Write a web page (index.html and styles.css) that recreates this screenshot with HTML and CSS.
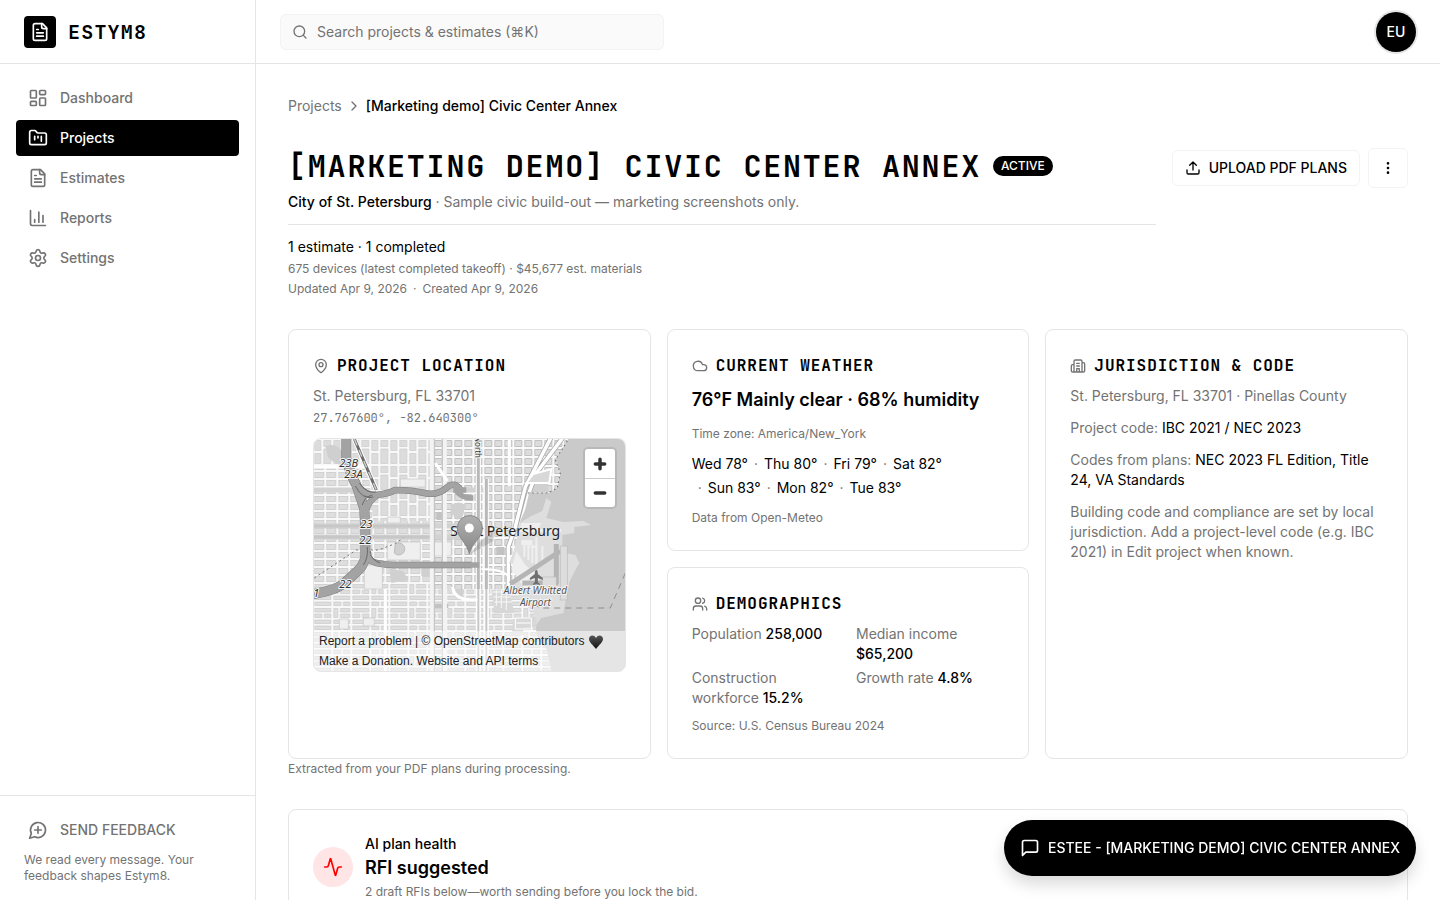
FILE: index.html
```html
<!DOCTYPE html>
<html lang="en">
<head>
<meta charset="utf-8">
<title>[Marketing demo] Civic Center Annex - Estym8</title>
<link rel="stylesheet" href="styles.css">
</head>
<body>
<svg class="sprite" aria-hidden="true">
  <symbol id="i-file" viewBox="0 0 24 24"><path d="M15 2H6a2 2 0 0 0-2 2v16a2 2 0 0 0 2 2h12a2 2 0 0 0 2-2V7Z"/><path d="M14 2v4a2 2 0 0 0 2 2h4M10 9H8M16 13H8M16 17H8"/></symbol>
</svg>
<div class="app">
  <aside class="sidebar">
    <a class="brand" href="#"><span class="brand-mark"><svg class="icon icon-20"><use href="#i-file"/></svg></span><span class="brand-name">ESTYM8</span></a>
    <nav class="nav" aria-label="Main">
      <a class="nav-item" href="#"><svg class="icon icon-20" viewBox="0 0 24 24"><rect width="7" height="9" x="3" y="3" rx="1"/><rect width="7" height="5" x="14" y="3" rx="1"/><rect width="7" height="9" x="14" y="12" rx="1"/><rect width="7" height="5" x="3" y="16" rx="1"/></svg>Dashboard</a>
      <a class="nav-item active" href="#" aria-current="page"><svg class="icon icon-20" viewBox="0 0 24 24"><path d="M4 20h16a2 2 0 0 0 2-2V8a2 2 0 0 0-2-2h-7.930a2 2 0 0 1-1.660-.9l-.820-1.200A2 2 0 0 0 7.930 3H4a2 2 0 0 0-2 2v13c0 1.100.9 2 2 2ZM8 10v4M12 10v2M16 10v6"/></svg>Projects</a>
      <a class="nav-item" href="#"><svg class="icon icon-20"><use href="#i-file"/></svg>Estimates</a>
      <a class="nav-item" href="#"><svg class="icon icon-20" viewBox="0 0 24 24"><path d="M3 3v16a2 2 0 0 0 2 2h16M18 17V9M13 17V5M8 17v-3"/></svg>Reports</a>
      <a class="nav-item" href="#"><svg class="icon icon-20" viewBox="0 0 24 24"><path d="M9.671 4.136a2.340 2.340 0 0 1 4.659 0 2.340 2.340 0 0 0 3.319 1.915 2.340 2.340 0 0 1 2.330 4.033 2.340 2.340 0 0 0 0 3.831 2.340 2.340 0 0 1-2.330 4.033 2.340 2.340 0 0 0-3.319 1.915 2.340 2.340 0 0 1-4.659 0 2.340 2.340 0 0 0-3.320-1.915 2.340 2.340 0 0 1-2.330-4.033 2.340 2.340 0 0 0 0-3.831A2.340 2.340 0 0 1 6.350 6.051a2.340 2.340 0 0 0 3.319-1.915"/><circle cx="12" cy="12" r="3"/></svg>Settings</a>
    </nav>
    <div class="feedback">
      <button class="feedback-button" type="button"><svg class="icon icon-20" viewBox="0 0 24 24"><path d="M7.900 20A9 9 0 1 0 4 16.100L2 22ZM8 12h8M12 8v8"/></svg>SEND FEEDBACK</button>
      <p class="feedback-note">We read every message. Your feedback shapes Estym8.</p>
    </div>
  </aside>

  <div class="page">
    <header class="topbar">
      <label class="search"><svg class="icon icon-16" viewBox="0 0 24 24"><path d="m21 21-4.340-4.340"/><circle cx="11" cy="11" r="8"/></svg><input type="search" aria-label="Search projects and estimates" placeholder="Search projects &amp; estimates (⌘K)"></label>
      <button class="avatar" type="button" aria-label="Account menu">EU</button>
    </header>

    <main class="main">
      <nav class="breadcrumb" aria-label="Breadcrumb"><a href="#">Projects</a><svg class="icon icon-16" viewBox="0 0 24 24"><path d="m9 18 6-6-6-6"/></svg><span>[Marketing demo] Civic Center Annex</span></nav>

      <section class="project-head">
        <div class="project-info">
          <div class="title-row"><h1>[MARKETING DEMO] CIVIC CENTER ANNEX</h1><span class="badge">ACTIVE</span></div>
          <p class="subtitle"><b>City of St. Petersburg</b> · Sample civic build-out — marketing screenshots only.</p>
          <div class="stats">
            <p>1 estimate · 1 completed</p>
            <p class="small">675 devices (latest completed takeoff) · $45,677 est. materials</p>
            <p class="small">Updated Apr 9, 2026<span class="dot">·</span>Created Apr 9, 2026</p>
          </div>
        </div>
        <div class="actions">
          <button class="upload" type="button"><svg class="icon icon-16" viewBox="0 0 24 24"><path d="M12 3v12M17 8l-5-5-5 5M21 15v4a2 2 0 0 1-2 2H5a2 2 0 0 1-2-2v-4"/></svg>UPLOAD PDF PLANS</button>
          <button class="more" type="button" aria-label="More actions"><svg class="icon icon-16" viewBox="0 0 24 24"><circle cx="12" cy="12" r="1"/><circle cx="12" cy="5" r="1"/><circle cx="12" cy="19" r="1"/></svg></button>
        </div>
      </section>

      <section class="cards">
        <article class="card">
          <h2><svg class="icon icon-16" viewBox="0 0 24 24"><path d="M20 10c0 4.993-5.539 10.193-7.399 11.799a1 1 0 0 1-1.202 0C9.539 20.193 4 14.993 4 10a8 8 0 0 1 16 0"/><circle cx="12" cy="10" r="3"/></svg>PROJECT LOCATION</h2>
          <p class="muted">St. Petersburg, FL 33701</p>
          <p class="coords">27.767600°, -82.640300°</p>
          <div class="map">
            <svg class="map-canvas" viewBox="0 0 312 232" preserveAspectRatio="xMidYMid slice" role="img" aria-label="Map of St. Petersburg">
              <defs>
                <pattern id="west" width="12" height="8" patternUnits="userSpaceOnUse"><rect width="12" height="8" fill="#f8f8f8"/><rect x="1.500" y="1.500" width="9" height="5" fill="#dedede" stroke="#c6c6c6" stroke-width=".7"/></pattern>
                <pattern id="north" width="19" height="26" patternUnits="userSpaceOnUse"><rect width="19" height="26" fill="#f8f8f8"/><path d="M1.500 1.500h6v10h-6zM10.500 1.500h7v6h-7zM10.500 10h7v14.500h-7zM1.500 14.500h6v10h-6z" fill="#dcdcdc" stroke="#c4c4c4" stroke-width=".6"/></pattern>
                <pattern id="center" width="10" height="9" patternUnits="userSpaceOnUse"><rect width="10" height="9" fill="#fafafa"/><path d="M1.500 1.500h7v6h-7z" fill="#dcdcdc" stroke="#bcbcbc" stroke-width=".9"/></pattern>
                <pattern id="south" width="38" height="24" patternUnits="userSpaceOnUse"><rect width="38" height="24" fill="#f8f8f8"/><path d="M1.500 1.500h16v3.500h-16zM1.500 7h7v3.500h-7zM11 7h6.500v3.500h-6.500zM1.500 13h16v3.500h-16zM1.500 19h16v3.500h-16zM20.500 1.500h4v9h-4zM27 1.500h9.500v3.500h-9.500zM27 7h9.500v3.500h-9.500zM20.500 13h16v3.500h-16zM20.500 19h7v3.500h-7zM30 19h6.500v3.500h-6.500z" fill="#dedede" stroke="#c2c2c2" stroke-width=".6"/></pattern>
                <linearGradient id="pin" x2="0" y2="1"><stop stop-color="#b0b0b0"/><stop offset="1" stop-color="#888"/></linearGradient>
                <linearGradient id="heart" x2="0" y2="1"><stop stop-color="#555"/><stop offset="1" stop-color="#111"/></linearGradient>
                <clipPath id="land"><path d="M0 0H255L242 20L247 34L244 49L235 54L216 53L212 70L207 82L202 107L196 124L208 128L202 145L207 160L222 176L223 196L233 210L238 232H0Z"/></clipPath>
              </defs>
              <rect width="312" height="232" fill="#cacaca"/>
              <path d="M203 86 218 77l11-5 4-13 5 4-5 16 17 4 20-1 8 4-17 2v6l-12 2v17l13 3 4 8-4 7-6 12-6 31-22 5-14 19-18-4-5-80Z" fill="#dedede"/>
              <g clip-path="url(#land)">
                <rect width="312" height="232" fill="#f0f0f0"/>
                <rect y="28" width="118" height="75" fill="url(#west)"/>
                <path d="M0 0H118V82H60L55 28H0Z" fill="url(#north)"/>
                <path d="M0 103H118V145H0Z" fill="url(#west)"/>
                <path d="M0 145H312V232H0Z" fill="url(#south)"/>
                <path d="M118 0H312V150H118Z" fill="url(#center)"/>
                <path d="M12 7q13-4 19 9l5 12q-13-2-21-9Z" fill="#cfcfcf"/>
                <g fill="#efefef" stroke="#c8c8c8" stroke-width=".7"><path d="M74 78h13v6H74zM87 40h25v8H87zM74 103h33v18H74zM51 126h18v24H51zM118 103h20v14h-20zM26 180h9v10h-9zM50 179h11v8H50z"/></g>
                <g fill="#d0d0d0"><path d="M138 66q7-5 14 0l-2 10-6 5-7-8zM108 128h9v9h-9zM76 130l14 2 5 9-17 3zM142 150h8v8h-8zM214 45h21v9h-21z"/></g>
                <g fill="#c2c2c2"><path d="M121 165h14v4h-14zM123 73h10v8h-10zM183 108h8v8h-8z"/></g>
                <path d="M82 105a6 6 0 1 1-1 9Z" fill="#d0d0d0" stroke="#bbb"/>
                <g fill="none" stroke-width="5"><path d="M0 51H46M118 51H170M0 87H158M0 98H158" stroke="#d2d2d2"/><path d="M0 87H118M0 98H118" stroke="#c7c7c7" stroke-width="3"/></g>
                <g fill="none"><path d="M165 0V232M173 40V232" stroke-width="5" stroke="#fff"/><path d="M165 0V150M173 40V150" stroke="#b9b9b9" stroke-width="3"/><path d="M165 150V232M173 150V232" stroke="#c6c6c6" stroke-width="2"/></g>
                <path d="M119 0V232M131 0V232" stroke="#f3f3f3" stroke-width="5"/>
                <path d="M121 0V232M129 0V232" stroke="#bdbdbd" stroke-width="1"/>
                <path d="M72 150V232M0 28H55M196 0V47M134 42L122 24" fill="none" stroke="#fff" stroke-width="3"/>
                <path d="M238 -2L212 48L202 88L195 108V150M250 -2L223 34L216 53L207 87" fill="none" stroke="#aaa" stroke-width="5"/>
                <path d="M238 -2L212 48L202 88L195 108V150M250 -2L223 34L216 53L207 87" fill="none" stroke="#fff" stroke-width="3.500"/>
                <path d="M213 44h23l2-14-18 5Z" fill="#d8d8d8" stroke="#fff" stroke-width="2"/>
                <path d="M168 130q20 0 27 7M196 118l12-6 7 17h-14Z" fill="none" stroke="#fff" stroke-width="2"/>
                <path d="M139 148q2 10 12 12t13 0" fill="none" stroke="#fff" stroke-width="3"/>
                <path d="M178 151l18 1 5 22h-20z" fill="#d7d7d7"/><path d="M179 153h17M180 158h18M181 163h18M183 151v16M188 151v18M193 151v20" stroke="#f8f8f8"/>
              </g>
              <path d="M254 2L242 21l5 13-3 15-9 5h-23" fill="none" stroke="#777" stroke-dasharray="1.500 3" stroke-width="1.200"/>
              <path d="M41 0 63 51" stroke="#fff" stroke-width="5"/><path d="M41 0 63 51" stroke="#6b6b6b" stroke-width="3"/><path d="M41 0 63 51" stroke="#ccc" stroke-dasharray="7 5" stroke-width="1.500"/>
              <path d="M1 139 43 111H65L81 105 90 99" fill="none" stroke="#777" stroke-dasharray="2 3"/>
              <g fill="none" stroke-linejoin="round">
                <g stroke="#7c7c7c"><path d="M33 0V19Q37 36 43 46L51 70L52 91V118Q50 128 42 134L30 145Q20 152 0 155" stroke-width="10"/><path d="M44 46Q52 57 63 56T82 51Q98 51 111 54T133 49T148 53M52 74Q54 62 66 55M52 112Q54 122 63 124T80 126H158" stroke-width="6.500"/></g>
                <g stroke="#a3a3a3"><path d="M33 0V19Q37 36 43 46L51 70L52 91V118Q50 128 42 134L30 145Q20 152 0 155" stroke-width="9"/><path d="M44 46Q52 57 63 56T82 51Q98 51 111 54T133 49T148 53M52 74Q54 62 66 55M52 112Q54 122 63 124T80 126H166M140 51H153M143 52Q148 59 160 59" stroke-width="5.500"/></g>
                <path d="M42 47q7 14 18 11M46 44q7 11 17 9M49 66q2-8 10-10M50 126q5-7 4-18M57 112q0 9 10 12" stroke="#5c5c5c" stroke-width=".8"/>
              </g>
              <g fill="#efefef"><path d="M208 84h20l-3 6h23v3h-42zM208 101h11v5h-11zM211 108l13-2v21h-2v-18M227 109v17M232 109v18M237 111v16"/><path d="M203 112l9 14 12 10 5 17-18-4-13-19Z"/></g>
              <path d="M223 98v28M211 104v14M215 105v16M219 106v18M229 107v17" stroke="#efefef" stroke-width="2"/>
              <g fill="none" stroke="#b5b5b5" stroke-width="5"><path d="M197 145 247 112M243 105V145M209 144H245M202 151H216"/></g>
              <path d="M247 107h7v54h-7zM229 138h14v12h-14z" fill="#ddd" stroke="#bcbcbc" stroke-width=".7"/>
              <path d="M213 178h10v10h-13v8h-12l2-16Z" fill="#d8d8d8"/><path d="M202 179h16v11h-16zM203 184h14" fill="none" stroke="#fff"/>
              <path d="M220 165l7 4H297L312 134" fill="none" stroke="#8e8e8e" stroke-dasharray="6 5"/>
              <path d="M223 131q1.500 0 1.500 4l5 4v2l-5-2v4l2 2v1l-3.500-1-3.500 1v-1l2-2v-4l-5 2v-2l5-4q0-4 1.500-4" fill="#6f6f6f"/>
              <g class="map-route"><text x="26" y="28">23B</text><text x="31" y="39">23A</text><text x="47" y="89">23</text><text x="46" y="105">22</text><text x="26" y="149">22</text><text x="0" y="158">1</text></g>
              <text class="map-road" transform="translate(162 -3) rotate(90)">North</text>
              <text class="map-city" x="137" y="97">Saint Petersburg</text>
              <g class="map-place"><text x="222" y="155">Albert Whitted</text><text x="222" y="167">Airport</text></g>
              <path d="m157 115 10-13 14-10-1 10Z" fill="#777" opacity=".3"/>
              <path d="M156 115C154 104 144 99 144 89a12.500 12.500 0 0 1 25 0c0 10-11 15-13 26Z" fill="url(#pin)" stroke="#888" stroke-width="1"/><circle cx="156" cy="89" r="4.500" fill="#fff"/>
            </svg>
            <div class="zoom"><button type="button" aria-label="Zoom in"><svg viewBox="0 0 12 12"><path d="M6 2v8M2 6h8"/></svg></button><button type="button" aria-label="Zoom out"><svg viewBox="0 0 12 12"><path d="M2 6h8"/></svg></button></div>
            <div class="attribution"><a href="#">Report a problem</a> | © <a href="#">OpenStreetMap</a> contributors <svg class="heart" viewBox="0 0 16 16"><path d="M8 15C5 11 1 8 1 5 1 1 6 0 8 4c2-4 7-3 7 1 0 3-4 6-7 10Z" fill="url(#heart)"/></svg><br><a href="#">Make a Donation</a>. <a href="#">Website and API terms</a></div>
          </div>
        </article>

        <div class="card-stack">
          <article class="card">
            <h2><svg class="icon icon-16" viewBox="0 0 24 24"><path d="M17.500 19H9a7 7 0 1 1 6.710-9h1.790a4.500 4.500 0 1 1 0 9Z"/></svg>CURRENT WEATHER</h2>
            <p class="weather-now">76°F Mainly clear · 68% humidity</p>
            <p class="small spaced">Time zone: America/New_York</p>
            <ul class="forecast"><li>Wed 78°</li><li>Thu 80°</li><li>Fri 79°</li><li>Sat 82°</li><li>Sun 83°</li><li>Mon 82°</li><li>Tue 83°</li></ul>
            <p class="small spaced">Data from Open-Meteo</p>
          </article>
          <article class="card">
            <h2><svg class="icon icon-16" viewBox="0 0 24 24"><path d="M16 21v-2a4 4 0 0 0-4-4H6a4 4 0 0 0-4 4v2M16 3.128a4 4 0 0 1 0 7.744M22 21v-2a4 4 0 0 0-3-3.870"/><circle cx="9" cy="7" r="4"/></svg>DEMOGRAPHICS</h2>
            <div class="facts"><p>Population <b>258,000</b></p><p>Median income <b>$65,200</b></p><p>Construction workforce <b>15.2%</b></p><p>Growth rate <b>4.8%</b></p></div>
            <p class="small source">Source: U.S. Census Bureau 2024</p>
          </article>
        </div>

        <article class="card">
          <h2><svg class="icon icon-16" viewBox="0 0 24 24"><path d="M10 12h4M10 8h4M14 21v-3a2 2 0 0 0-4 0v3M6 10H4a2 2 0 0 0-2 2v7a2 2 0 0 0 2 2h16a2 2 0 0 0 2-2V9a2 2 0 0 0-2-2h-2M6 21V5a2 2 0 0 1 2-2h8a2 2 0 0 1 2 2v16M10 16h4"/></svg>JURISDICTION &amp; CODE</h2>
          <p class="muted">St. Petersburg, FL 33701 · Pinellas County</p>
          <p class="muted spaced">Project code: <span class="ink">IBC 2021 / NEC 2023</span></p>
          <p class="muted spaced">Codes from plans: <span class="ink">NEC 2023 FL Edition, Title 24, VA Standards</span></p>
          <p class="muted spaced">Building code and compliance are set by local jurisdiction. Add a project-level code (e.g. IBC 2021) in Edit project when known.</p>
        </article>
      </section>
      <p class="small extracted">Extracted from your PDF plans during processing.</p>

      <section class="card health">
        <span class="health-icon"><svg class="icon icon-20" viewBox="0 0 24 24"><path d="M22 12h-2.480a2 2 0 0 0-1.930 1.460l-2.350 8.360a.25.25 0 0 1-.480 0L9.240 2.180a.25.25 0 0 0-.480 0l-2.350 8.360A2 2 0 0 1 4.490 12H2"/></svg></span>
        <div><p class="health-label">AI plan health</p><p class="health-status">RFI suggested</p><p class="small health-note">2 draft RFIs below—worth sending before you lock the bid.</p></div>
      </section>
    </main>
  </div>
</div>
<button class="chat" type="button"><svg class="icon icon-20" viewBox="0 0 24 24"><path d="M21 15a2 2 0 0 1-2 2H7l-4 4V5a2 2 0 0 1 2-2h14a2 2 0 0 1 2 2z"/></svg>ESTEE - [MARKETING DEMO] CIVIC CENTER ANNEX</button>
</body>
</html>
```
FILE: styles.css
```css
:root { --ink: #000; --muted: #737373; --line: #e5e5e5; --soft: #f3f3f3; --mono: "JetBrains Mono", "DejaVu Sans Mono", monospace; }
*, *::before, *::after { box-sizing: border-box; }
body { margin: 0; height: 100vh; overflow: hidden; font: 400 14px/20px Inter, sans-serif; color: var(--ink); background: #fff; }
p, h1, h2, ul { margin: 0; padding: 0; }
a { color: inherit; text-decoration: none; }
button, input { font: inherit; color: inherit; }
button { cursor: pointer; }
b { font-weight: 500; color: var(--ink); }
.sprite { display: none; }
.icon { flex: none; fill: none; stroke: currentColor; stroke-width: 2; stroke-linecap: round; stroke-linejoin: round; }
.icon-16 { width: 16px; height: 16px; }
.icon-20 { width: 20px; height: 20px; }
.muted { color: var(--muted); }
.ink { color: var(--ink); }
.small { font-size: 12px; line-height: 16px; color: var(--muted); }
.spaced { margin-top: 12px; }
.dot { margin: 0 6px; }

.app { display: grid; grid-template-columns: 256px minmax(0, 1fr); height: 100vh; }
.sidebar { display: flex; flex-direction: column; border-right: 1px solid var(--line); }
.brand { display: flex; align-items: center; gap: 12px; height: 64px; padding: 0 24px; border-bottom: 1px solid var(--line); }
.brand-mark { display: grid; place-items: center; width: 32px; height: 32px; border-radius: 4px; background: #000; color: #fff; }
.brand-name { font: 600 20px/28px var(--mono); letter-spacing: .06em; }
.nav { flex: 1; display: flex; flex-direction: column; gap: 4px; padding: 16px; }
.nav-item { display: flex; align-items: center; gap: 12px; height: 36px; padding: 0 12px; border-radius: 4px; font-weight: 500; color: var(--muted); }
.nav-item.active { background: #000; color: #fff; }
.feedback { padding: 16px; border-top: 1px solid var(--line); }
.feedback-button { display: flex; align-items: center; gap: 12px; width: 100%; height: 36px; padding: 0 12px; border: 0; background: none; font-weight: 500; color: var(--muted); }
.feedback-note { padding: 4px 8px 0; font-size: 12px; line-height: 16px; color: var(--muted); }

.page { display: flex; flex-direction: column; min-width: 0; min-height: 0; }
.topbar { flex: none; display: flex; align-items: center; justify-content: space-between; height: 64px; padding: 0 24px; border-bottom: 1px solid var(--line); }
.search { display: flex; align-items: center; gap: 8px; width: 384px; height: 36px; padding: 0 12px 0 11px; border: 1px solid var(--soft); border-radius: 6px; background: #fafafa; color: var(--muted); }
.search input { flex: 1; min-width: 0; padding: 0 0 0 1px; border: 0; outline: 0; background: none; }
.search input::placeholder { color: var(--muted); opacity: 1; }
.avatar { width: 40px; height: 40px; padding: 0; border: 0; border-radius: 50%; background: #000; color: #fff; font-weight: 500; box-shadow: 0 0 0 2px var(--line); }
.main { flex: 1; min-height: 0; overflow: hidden; padding: 32px; }
.breadcrumb { display: flex; align-items: center; gap: 4px; color: var(--muted); }
.breadcrumb span { font-weight: 500; color: var(--ink); }

.project-head { display: flex; align-items: flex-start; gap: 16px; margin: 32px 0; }
.project-info { flex: 1; min-width: 0; }
.title-row { display: flex; align-items: center; gap: 12px; }
h1 { font: 600 30px/36px var(--mono); letter-spacing: .06em; }
.badge { padding: 2px 8px; border-radius: 10px; background: #000; color: #fff; font-size: 12px; line-height: 16px; font-weight: 500; }
.subtitle { margin-top: 8px; color: var(--muted); }
.stats { display: grid; gap: 4px; margin-top: 12px; padding-top: 12px; border-top: 1px solid var(--line); }
.actions { display: flex; align-items: center; gap: 8px; }
.upload, .more { display: flex; align-items: center; justify-content: center; gap: 8px; border: 1px solid var(--soft); border-radius: 6px; background: #fff; font-weight: 500; }
.upload { height: 36px; padding: 0 12px; }
.more { width: 40px; height: 40px; padding: 0; }

.cards { display: grid; grid-template-columns: repeat(3, minmax(0, 1fr)); gap: 16px; }
.card { padding: 24px; border: 1px solid var(--line); border-radius: 8px; }
.card-stack { display: grid; gap: 16px; }
h2 { display: flex; align-items: center; gap: 8px; margin-bottom: 8px; font: 600 16px/24px var(--mono); letter-spacing: .06em; }
h2 .icon { color: var(--muted); }
.coords { margin-top: 4px; font: 12px/16px var(--mono); color: var(--muted); }
.weather-now { font-size: 18px; line-height: 28px; font-weight: 600; }
.forecast { display: flex; flex-wrap: wrap; gap: 4px 0; margin-top: 12px; list-style: none; }
.forecast li + li::before { content: "·"; margin: 0 6px; color: var(--muted); }
.facts { display: grid; grid-template-columns: 1fr 1fr; gap: 4px 16px; color: var(--muted); }
.source { margin-top: 10px; }
.extracted { margin-top: 2px; }
.health { display: flex; align-items: center; gap: 12px; margin-top: 32px; }
.health-icon { display: grid; place-items: center; width: 40px; height: 40px; border-radius: 50%; background: #ffe5e5; color: #f00; }
.health-label { font-weight: 500; }
.health-status { font-size: 18px; line-height: 28px; font-weight: 600; }
.health-note { margin-top: 2px; }

.map { position: relative; height: 234px; margin-top: 12px; overflow: hidden; border: 1px solid var(--line); border-radius: 8px; }
.map-canvas { display: block; width: 100%; height: 100%; }
.map text { paint-order: stroke; stroke: #f5f5f5; stroke-linejoin: round; }
.map-route { font: italic 11px "Noto Sans", sans-serif; fill: #333; stroke-width: 2px; }
.map-road { font: 8px "Noto Sans", sans-serif; fill: #333; stroke-width: 2px; }
.map text.map-city { font: 14px "Noto Sans", sans-serif; fill: #222; stroke: #e8e8e8; stroke-width: 1px; }
.map-place { font: italic 10px "Noto Sans", sans-serif; fill: #555; stroke-width: 2px; text-anchor: middle; }
.zoom { position: absolute; top: 8px; right: 8px; overflow: hidden; border: 2px solid #b8b8b8; border-radius: 5px; }
.zoom button { display: grid; place-items: center; width: 30px; height: 29px; padding: 0; border: 0; background: #fff; }
.zoom button + button { border-top: 1px solid #ccc; }
.zoom svg { width: 14px; height: 14px; fill: none; stroke: #333; stroke-width: 3; stroke-linecap: round; }
.attribution { position: absolute; inset: auto 0 0; padding: 0 5px; background: rgba(255, 255, 255, .5); color: #222; font: 12px/20px "Liberation Sans", sans-serif; }
.heart { width: 16px; height: 16px; vertical-align: middle; }
.chat { position: fixed; right: 24px; bottom: 24px; display: flex; align-items: center; gap: 8px; height: 56px; padding: 0 16px; border: 0; border-radius: 28px; background: #000; color: #fff; font-weight: 500; box-shadow: 0 8px 16px rgba(0, 0, 0, .15); }
```
